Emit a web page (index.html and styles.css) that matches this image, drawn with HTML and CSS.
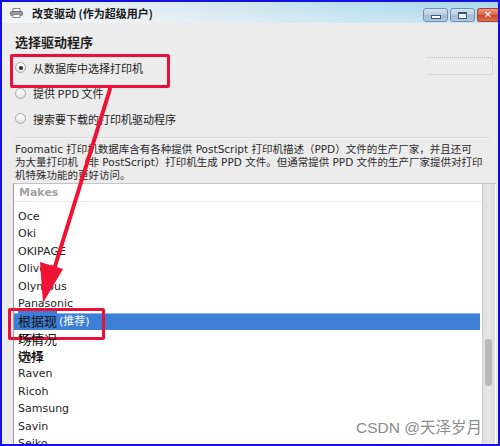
FILE: index.html
```html
<!DOCTYPE html>
<html lang="zh-CN">
<head>
    <meta charset="UTF-8">
    <title>改变驱动 (作为超级用户)</title>
    <link rel="stylesheet" href="styles.css">
</head>
<body>
    <div class="window">

        <!-- title bar -->
        <div class="titlebar">
            <svg class="app-icon" width="13" height="10" viewBox="0 0 13 10">
                <rect x="3" y="0.5" width="7" height="3" fill="#f4f4f4" stroke="#8a8a8a" stroke-width="1"/>
                <rect x="0.5" y="3.5" width="12" height="4" rx="1" fill="#9a9a9a" stroke="#6e6e6e" stroke-width="1"/>
                <rect x="3" y="6.5" width="7" height="3" fill="#ffffff" stroke="#8a8a8a" stroke-width="1"/>
            </svg>
            <span class="title">改变驱动 (作为超级用户)</span>
            <div class="win-btns">
                <span class="wbtn min"><i></i></span>
                <span class="wbtn max"><i></i></span>
                <span class="wbtn close">✕</span>
            </div>
        </div>

        <div class="content">
            <h2 class="heading">选择驱动程序</h2>

            <div class="options">
                <div class="opt">
                    <span class="radio checked"></span>从数据库中选择打印机
                    <span class="path-box"></span>
                </div>
                <div class="opt"><span class="radio"></span>提供 PPD 文件</div>
                <div class="opt"><span class="radio"></span>搜索要下载的打印机驱动程序</div>
            </div>

            <div class="sep"></div>

            <p class="desc">Foomatic 打印机数据库含有各种提供 PostScript 打印机描述（PPD）文件的生产厂家，并且还可<br>为大量打印机（非 PostScript）打印机生成 PPD 文件。但通常提供 PPD 文件的生产厂家提供对打印<br>机特殊功能的更好访问。</p>

            <!-- makes list -->
            <div class="makes">
                <div class="makes-main">
                    <div class="makes-head">Makes</div>
                    <div class="makes-rows">
                        <div class="rows-inner">
                            <div class="row">NRG</div>
                            <div class="row">Oce</div>
                            <div class="row">Oki</div>
                            <div class="row">OKIPAGE</div>
                            <div class="row">Olivetti</div>
                            <div class="row">Olympus</div>
                            <div class="row">Panasonic</div>
                            <div class="row selected">Pentax (推荐)</div>
                            <div class="row">PCL</div>
                            <div class="row">QMS</div>
                            <div class="row">Raven</div>
                            <div class="row">Ricoh</div>
                            <div class="row">Samsung</div>
                            <div class="row">Savin</div>
                            <div class="row">Seiko</div>
                        </div>
                    </div>
                </div>
                <div class="vscroll"><div class="thumb"></div></div>
            </div>
        </div>

        <!-- annotations drawn over the screenshot -->
        <div class="mark mark-top"></div>
        <div class="mark mark-row"></div>
        <div class="note"><span class="note-first">根据现</span><br>场情况<br>选择</div>
        <svg class="arrow" width="500" height="446" viewBox="0 0 500 446">
            <line x1="110" y1="89" x2="52" y2="276" stroke="#f01232" stroke-width="4" stroke-linecap="round"/>
            <polygon points="43,303 63,269 40,262" fill="#f01232"/>
        </svg>
        <div class="watermark">CSDN @天泽岁月</div>
    </div>
</body>
</html>
```

FILE: styles.css
```css
html, body {
    margin: 0;
    padding: 0;
}

body {
    font-family: "DejaVu Sans", "Noto Sans CJK SC", sans-serif;
    font-size: 11px;
    color: #1e1e1e;
}

.window {
    position: relative;
    width: 500px;
    height: 446px;
    box-sizing: border-box;
    border: 2px solid #1412e4;
    background-color: #ececec;
    display: flex;
    flex-direction: column;
    overflow: hidden;
}

/* title bar */

.titlebar {
    height: 21px;
    flex: none;
    display: flex;
    align-items: center;
    padding-left: 8px;
    background:
        linear-gradient(to bottom, rgba(255, 255, 255, 0) 0%, rgba(255, 255, 255, 0.35) 100%),
        linear-gradient(to right, #eef2f5 0%, #dbe9f1 35%, #b4dcef 75%, #a8d6ed 100%);
}

.app-icon {
    margin-right: 9px;
    margin-top: 1px;
}

.title {
    font-family: "Noto Sans CJK SC", "DejaVu Sans", sans-serif;
    font-weight: 700;
    font-size: 11px;
    color: #1a1a1a;
}

.win-btns {
    margin-left: auto;
    align-self: flex-start;
    margin-top: 6px;
    display: flex;
    gap: 2px;
}

.wbtn {
    width: 25px;
    height: 14px;
    box-sizing: border-box;
    border: 1px solid #7390b0;
    border-radius: 3px;
    background: linear-gradient(to bottom, #d3e2ef 0%, #b7cde1 50%, #a2bcd6 51%, #b0c9e0 100%);
    display: flex;
    align-items: center;
    justify-content: center;
}

.wbtn.min i {
    width: 8px;
    height: 2px;
    margin-top: 4px;
    background: #ffffff;
    border: 1px solid #3c5674;
}

.wbtn.max i {
    width: 7px;
    height: 4px;
    border: 1px solid #3c5674;
    border-top-width: 2px;
    background: #e8f0f8;
}

.wbtn.close {
    width: 21px;
    border-color: #a4422f;
    border-right: none;
    border-radius: 3px 0 0 3px;
    background: linear-gradient(to bottom, #e8967d 0%, #d9654a 50%, #c9452c 51%, #e0704e 100%);
    color: #ffffff;
    font-size: 10px;
    font-weight: 700;
    line-height: 12px;
}

/* body of the dialog */

.content {
    flex: 1;
    display: flex;
    flex-direction: column;
    padding-left: 11px;
    padding-right: 2px;
    min-height: 0;
}

.heading {
    font-family: "Noto Sans CJK SC", "DejaVu Sans", sans-serif;
    font-size: 13px;
    font-weight: 700;
    line-height: 16px;
    margin: 11px 0 0 2px;
}

.options {
    margin-top: 5px;
    display: flex;
    flex-direction: column;
}

.opt {
    height: 25.5px;
    display: flex;
    align-items: center;
    padding-left: 2px;
    font-family: "Noto Sans CJK SC", "DejaVu Sans", sans-serif;
    font-size: 11px;
    color: #222;
}

.radio {
    width: 11px;
    height: 11px;
    box-sizing: border-box;
    border: 1px solid #a8a8a8;
    border-radius: 50%;
    background: linear-gradient(to bottom, #ffffff 0%, #e2e2e2 100%);
    margin-right: 7px;
    display: flex;
    align-items: center;
    justify-content: center;
}

.radio.checked::after {
    content: "";
    width: 4px;
    height: 4px;
    border-radius: 50%;
    background: #2d2d2d;
}

.path-box {
    margin-left: auto;
    margin-right: 3px;
    margin-top: -3px;
    width: 65px;
    height: 18px;
    box-sizing: border-box;
    border-top: 1px dotted #b8b8b8;
    border-right: 1px solid #d6d6d6;
    border-bottom: 1px solid #d6d6d6;
}

.sep {
    margin: 5px 6px 0 1px;
    height: 1px;
    background: #d8d8d8;
    border-bottom: 1px solid #f6f6f6;
}

.desc {
    margin: 4px 0 0 2px;
    font-family: "DejaVu Sans", "Noto Sans CJK SC", sans-serif;
    font-size: 10.5px;
    line-height: 13px;
    color: #2a2a2a;
    white-space: nowrap;
}

/* makes list */

.makes {
    margin-top: 1px;
    flex: 1;
    min-height: 0;
    display: flex;
    border-left: 1px solid #9c9c9c;
    border-top: 1px solid #c4c4c4;
    background: #ffffff;
}

.makes-main {
    flex: 1;
    display: flex;
    flex-direction: column;
    min-width: 0;
}

.makes-head {
    height: 17px;
    flex: none;
    padding-left: 5px;
    line-height: 17px;
    font-weight: 700;
    color: #a2a2a2;
    border-bottom: 1px solid #ebebeb;
}

.makes-rows {
    flex: 1;
    overflow: hidden;
}

.rows-inner {
    margin-top: -11.25px;
}

.row {
    height: 17.5px;
    line-height: 17.5px;
    padding-left: 4px;
    color: #1e1e1e;
    white-space: nowrap;
}

.row.selected {
    background: #3d7ed6;
    color: #ffffff;
    border-top: 1px solid #8fb5e8;
    height: 16.5px;
    line-height: 16.5px;
    margin-right: 2px;
    font-family: "DejaVu Sans", "Noto Sans CJK SC", sans-serif;
}

.vscroll {
    width: 12px;
    flex: none;
    margin-right: 1px;
    background: linear-gradient(to right, #dedede, #e8e8e8 50%, #dcdcdc);
    border-left: 1px solid #d0d0d0;
    position: relative;
}

.thumb {
    position: absolute;
    left: 2px;
    top: 155px;
    width: 7px;
    height: 47px;
    border-radius: 3px;
    background: #b9b9b9;
}

/* annotations */

.mark {
    position: absolute;
    border: 3px solid #ec1038;
    border-radius: 2px;
    box-sizing: border-box;
}

.mark-top {
    left: 8px;
    top: 52px;
    width: 160px;
    height: 34px;
}

.mark-row {
    left: 6px;
    top: 306px;
    width: 97px;
    height: 32px;
}

.note {
    position: absolute;
    left: 16px;
    top: 310px;
    font-family: "Noto Sans CJK SC", sans-serif;
    font-size: 13px;
    line-height: 17.5px;
    color: #111111;
}

.note-first {
    background: #3d7ed6;
}

.arrow {
    position: absolute;
    left: -2px;
    top: -2px;
}

.watermark {
    position: absolute;
    left: 354px;
    top: 413px;
    font-family: "Liberation Sans", "Noto Sans CJK SC", sans-serif;
    font-size: 15.5px;
    color: #8c8c8c;
}
```
